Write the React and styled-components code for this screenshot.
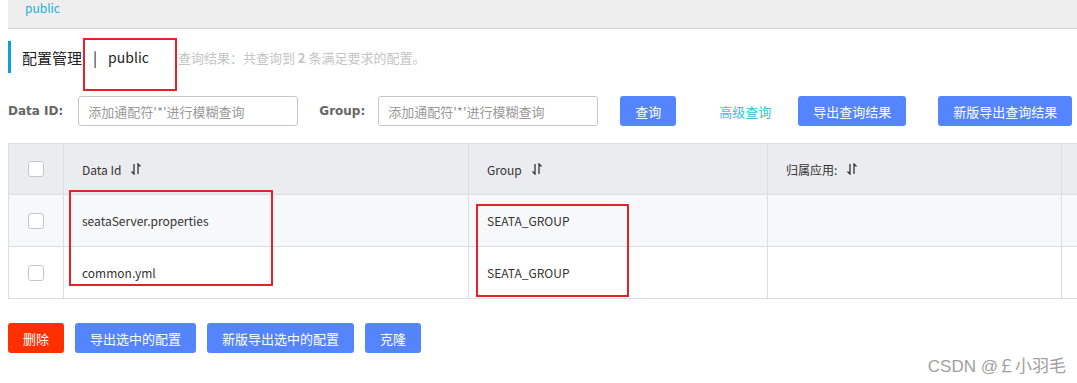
import styled, { createGlobalStyle } from "styled-components";

const GlobalStyle = createGlobalStyle`
  html, body {
    margin: 0;
    padding: 0;
    background: #fff;
    overflow: hidden;
  }
  body {
    font-family: "Noto Sans CJK SC", "Noto Sans", sans-serif;
    color: #333;
  }
`;

const columns = [
  { key: "id", title: "Data Id", width: 405 },
  { key: "group", title: "Group", width: 299 },
  { key: "app", title: "归属应用:", width: 294 },
  { key: "more", title: "", width: 240 },
];

const rows = [
  { id: "seataServer.properties", group: "SEATA_GROUP", app: "" },
  { id: "common.yml", group: "SEATA_GROUP", app: "" },
];

function SortIcon() {
  return (
    <svg width="12" height="12" viewBox="0 0 12 12" fill="none" stroke="#333" strokeWidth="1.3">
      <path d="M4 1v10l-2.5-2.5" />
      <path d="M8 11V1l2.5 2.5" />
    </svg>
  );
}

export default function App() {
  const gridCols = "55px " + columns.map((c) => c.width + "px").join(" ");

  return (
    <Page>
      <GlobalStyle />
      <TopBar>public</TopBar>

      <TitleRow>
        <Title>配置管理</Title>
        <Divider>|</Divider>
        <Title $latin>public</Title>
        <Summary>查询结果：共查询到 <b>2</b> 条满足要求的配置。</Summary>
      </TitleRow>

      <SearchRow>
        <Label>Data ID:</Label>
        <Input placeholder="添加通配符'*'进行模糊查询" />
        <Label $ml={21} $mr={13}>Group:</Label>
        <Input placeholder="添加通配符'*'进行模糊查询" />
        <Button $ml={22}>查询</Button>
        <LinkText>高级查询</LinkText>
        <Button $ml={27}>导出查询结果</Button>
        <Button $ml={32}>新版导出查询结果</Button>
      </SearchRow>

      <Table>
        <Row $cols={gridCols} $head>
          <Cell $center>
            <Checkbox />
          </Cell>
          {columns.map((c) => (
            <Cell key={c.key}>
              {c.title && (
                <>
                  <span>{c.title}</span>
                  <SortIcon />
                </>
              )}
            </Cell>
          ))}
        </Row>
        {rows.map((r, i) => (
          <Row key={r.id} $cols={gridCols} $striped={i === 0}>
            <Cell $center>
              <Checkbox />
            </Cell>
            <Cell>{r.id}</Cell>
            <Cell>{r.group}</Cell>
            <Cell>{r.app}</Cell>
            <Cell />
          </Row>
        ))}
      </Table>

      <Actions>
        <Button $danger>删除</Button>
        <Button>导出选中的配置</Button>
        <Button>新版导出选中的配置</Button>
        <Button>克隆</Button>
      </Actions>

      <Mark $x={83} $y={38} $w={94} $h={53} />
      <Mark $x={69} $y={190} $w={204} $h={96} />
      <Mark $x={476} $y={204} $w={153} $h={93} />

      <Watermark>CSDN @￡小羽毛</Watermark>
    </Page>
  );
}

const Page = styled.div`
  position: relative;
  width: 1077px;
  height: 383px;
  padding-left: 8px;
  box-sizing: border-box;
  overflow: hidden;
`;

const TopBar = styled.div`
  height: 29px;
  box-sizing: border-box;
  background: #eeeeee;
  border-bottom: 1px solid #d3d3d3;
  padding-left: 17px;
  font-size: 12px;
  line-height: 16px;
  color: #19b0dc;
`;

const TitleRow = styled.div`
  display: flex;
  align-items: center;
  height: 32px;
  margin-top: 12px;
  border-left: 3px solid #0aa0d8;
  padding-left: 11px;
`;

const Title = styled.span`
  font-size: ${(p) => (p.$latin ? 14 : 15)}px;
  color: #222;
`;

const Divider = styled.span`
  font-size: 15px;
  color: #222;
  margin: 0 11px 0 11px;
`;

const Summary = styled.span`
  margin-left: 29px;
  font-size: 13px;
  color: #c4c4c4;
  b {
    font-weight: bold;
  }
`;

const SearchRow = styled.div`
  display: flex;
  align-items: center;
  height: 30px;
  margin-top: 23px;
`;

const Label = styled.label`
  font-family: "DejaVu Sans", sans-serif;
  font-weight: bold;
  font-size: 12px;
  color: #666;
  margin-left: ${(p) => p.$ml || 0}px;
  margin-right: ${(p) => p.$mr || 15}px;
`;

const Input = styled.input`
  width: 220px;
  height: 30px;
  box-sizing: border-box;
  border: 1px solid #c4c6cf;
  border-radius: 3px;
  padding: 0 9px;
  font-family: inherit;
  font-size: 13px;
  outline: none;
  &::placeholder {
    color: #999;
  }
`;

const Button = styled.button`
  height: 30px;
  padding: 0 15px;
  margin-left: ${(p) => p.$ml || 0}px;
  border: none;
  border-radius: 3px;
  background: ${(p) => (p.$danger ? "#ff3000" : "#5584ff")};
  color: #fff;
  font-family: inherit;
  font-size: 13px;
  white-space: nowrap;
  cursor: pointer;
`;

const LinkText = styled.span`
  margin-left: 43px;
  font-size: 13px;
  color: #33c3dc;
  cursor: pointer;
`;

const Table = styled.div`
  margin-top: 17px;
  border-top: 1px solid #dcdee3;
  border-left: 1px solid #dcdee3;
  width: max-content;
`;

const Row = styled.div`
  display: grid;
  grid-template-columns: ${(p) => p.$cols};
  height: ${(p) => (p.$head ? 51 : 52)}px;
  background: ${(p) => (p.$head ? "#ebecf0" : p.$striped ? "#f7f8fa" : "#fff")};
`;

const Cell = styled.div`
  display: flex;
  align-items: center;
  justify-content: ${(p) => (p.$center ? "center" : "flex-start")};
  gap: 9px;
  box-sizing: border-box;
  padding: ${(p) => (p.$center ? "0" : "0 18px")};
  border-right: 1px solid #dcdee3;
  border-bottom: 1px solid #dcdee3;
  font-size: 12px;
  color: #333;
  white-space: nowrap;
`;

const Checkbox = styled.span`
  width: 16px;
  height: 16px;
  box-sizing: border-box;
  border: 1px solid #c4c6cf;
  border-radius: 3px;
  background: #fff;
`;

const Actions = styled.div`
  display: flex;
  gap: 11px;
  margin-top: 24px;
`;

const Mark = styled.div`
  position: absolute;
  left: ${(p) => p.$x}px;
  top: ${(p) => p.$y}px;
  width: ${(p) => p.$w}px;
  height: ${(p) => p.$h}px;
  box-sizing: border-box;
  border: 2px solid #e8202a;
  pointer-events: none;
`;

const Watermark = styled.div`
  position: absolute;
  right: 11px;
  top: 352px;
  font-family: "Liberation Sans", "Noto Sans CJK SC", sans-serif;
  font-size: 17px;
  color: #a0a0a0;
`;
